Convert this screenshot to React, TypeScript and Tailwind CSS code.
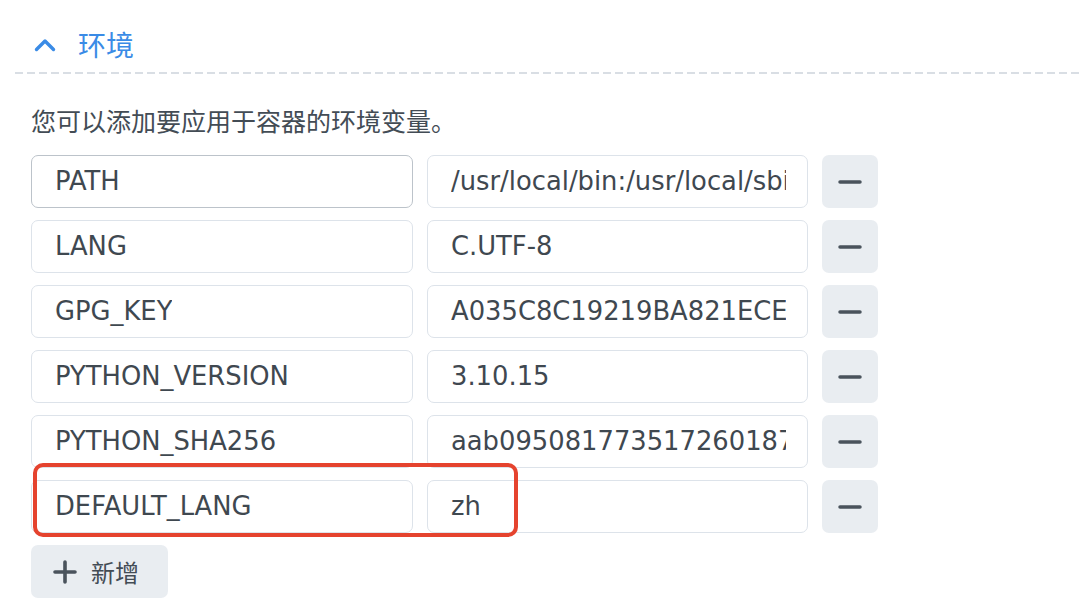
const rows: { key: string; value: string; focused?: boolean }[] = [
  {
    key: "PATH",
    value: "/usr/local/bin:/usr/local/sbin:/usr/local/bin:/usr/sbin:/usr/bin:/sbin:/bin",
    focused: true,
  },
  { key: "LANG", value: "C.UTF-8" },
  { key: "GPG_KEY", value: "A035C8C19219BA821ECEA86B64E628F8D9E7B2AA" },
  { key: "PYTHON_VERSION", value: "3.10.15" },
  {
    key: "PYTHON_SHA256",
    value: "aab0950817735172601879624a6ee4ba5d0f8b3e5fe8f4e6a6b4a1b4c4d5e6f7",
  },
  { key: "DEFAULT_LANG", value: "zh" },
];

function Field({ text, width, focused }: { text: string; width: string; focused?: boolean }) {
  return (
    <div
      className={[
        "flex h-[53px] items-center overflow-hidden whitespace-nowrap rounded-[7px] border bg-white pl-[23px] pr-[21px] text-[25.8px] text-[#3f4850]",
        width,
        focused ? "border-[#bcc3ca]" : "border-[#dde3ea]",
      ].join(" ")}
    >
      <span className="block overflow-hidden">{text}</span>
    </div>
  );
}

function MinusButton() {
  return (
    <button
      type="button"
      className="flex h-[53px] w-[56px] shrink-0 items-center justify-center rounded-[7px] bg-[#e9edf1]"
    >
      <svg width="24" height="4" viewBox="0 0 24 4">
        <line x1="2" y1="2" x2="22" y2="2" stroke="#4a535c" strokeWidth="3.5" strokeLinecap="round" />
      </svg>
    </button>
  );
}

export default function App() {
  return (
    <div className="h-[606px] w-[1080px] overflow-hidden bg-white font-['DejaVu_Sans','Noto_Sans_CJK_SC',sans-serif]">
      <div className="flex h-[58px] items-center gap-[22px] pl-[34px] pt-[30px]">
        <svg width="22" height="14" viewBox="0 0 22 14" className="mt-[1px]">
          <path
            d="M2.5 11.5 L11 3 L19.5 11.5"
            fill="none"
            stroke="#3a8be6"
            strokeWidth="3.4"
            strokeLinecap="round"
            strokeLinejoin="round"
          />
        </svg>
        <span className="font-['Noto_Sans_CJK_SC',sans-serif] text-[28px] leading-none text-[#3a8be6]">
          环境
        </span>
      </div>

      <div className="ml-[15px] mt-[14px] h-[2px] bg-[linear-gradient(to_right,#d9dee4_0_8px,transparent_8px_12px)] bg-[length:12px_2px]" />

      <div className="pl-[31px]">
        <p className="mt-[28px] font-['Noto_Sans_CJK_SC',sans-serif] text-[25px] leading-[36px] text-[#434c55]">
          您可以添加要应用于容器的环境变量。
        </p>

        <div className="mt-[17px] flex flex-col gap-[12px]">
          {rows.map((row, i) => (
            <div key={row.key} className="relative flex gap-[14px]">
              <Field text={row.key} width="w-[382px]" focused={row.focused} />
              <Field text={row.value} width="w-[381px]" />
              <MinusButton />
              {i === rows.length - 1 ? (
                <div className="pointer-events-none absolute left-[2px] top-[-17px] h-[74px] w-[485px] rounded-[10px] border-[4px] border-[#e5432e]" />
              ) : null}
            </div>
          ))}
        </div>

        <button
          type="button"
          className="mt-[12px] flex h-[53px] w-[137px] items-center gap-[14px] rounded-[7px] bg-[#e9edf1] pl-[22px] text-[#434c55]"
        >
          <svg width="24" height="24" viewBox="0 0 24 24">
            <path d="M12 2 V22 M2 12 H22" stroke="#4a535c" strokeWidth="3.6" strokeLinecap="round" />
          </svg>
          <span className="font-['Noto_Sans_CJK_SC',sans-serif] text-[24px] leading-none">新增</span>
        </button>
      </div>
    </div>
  );
}
